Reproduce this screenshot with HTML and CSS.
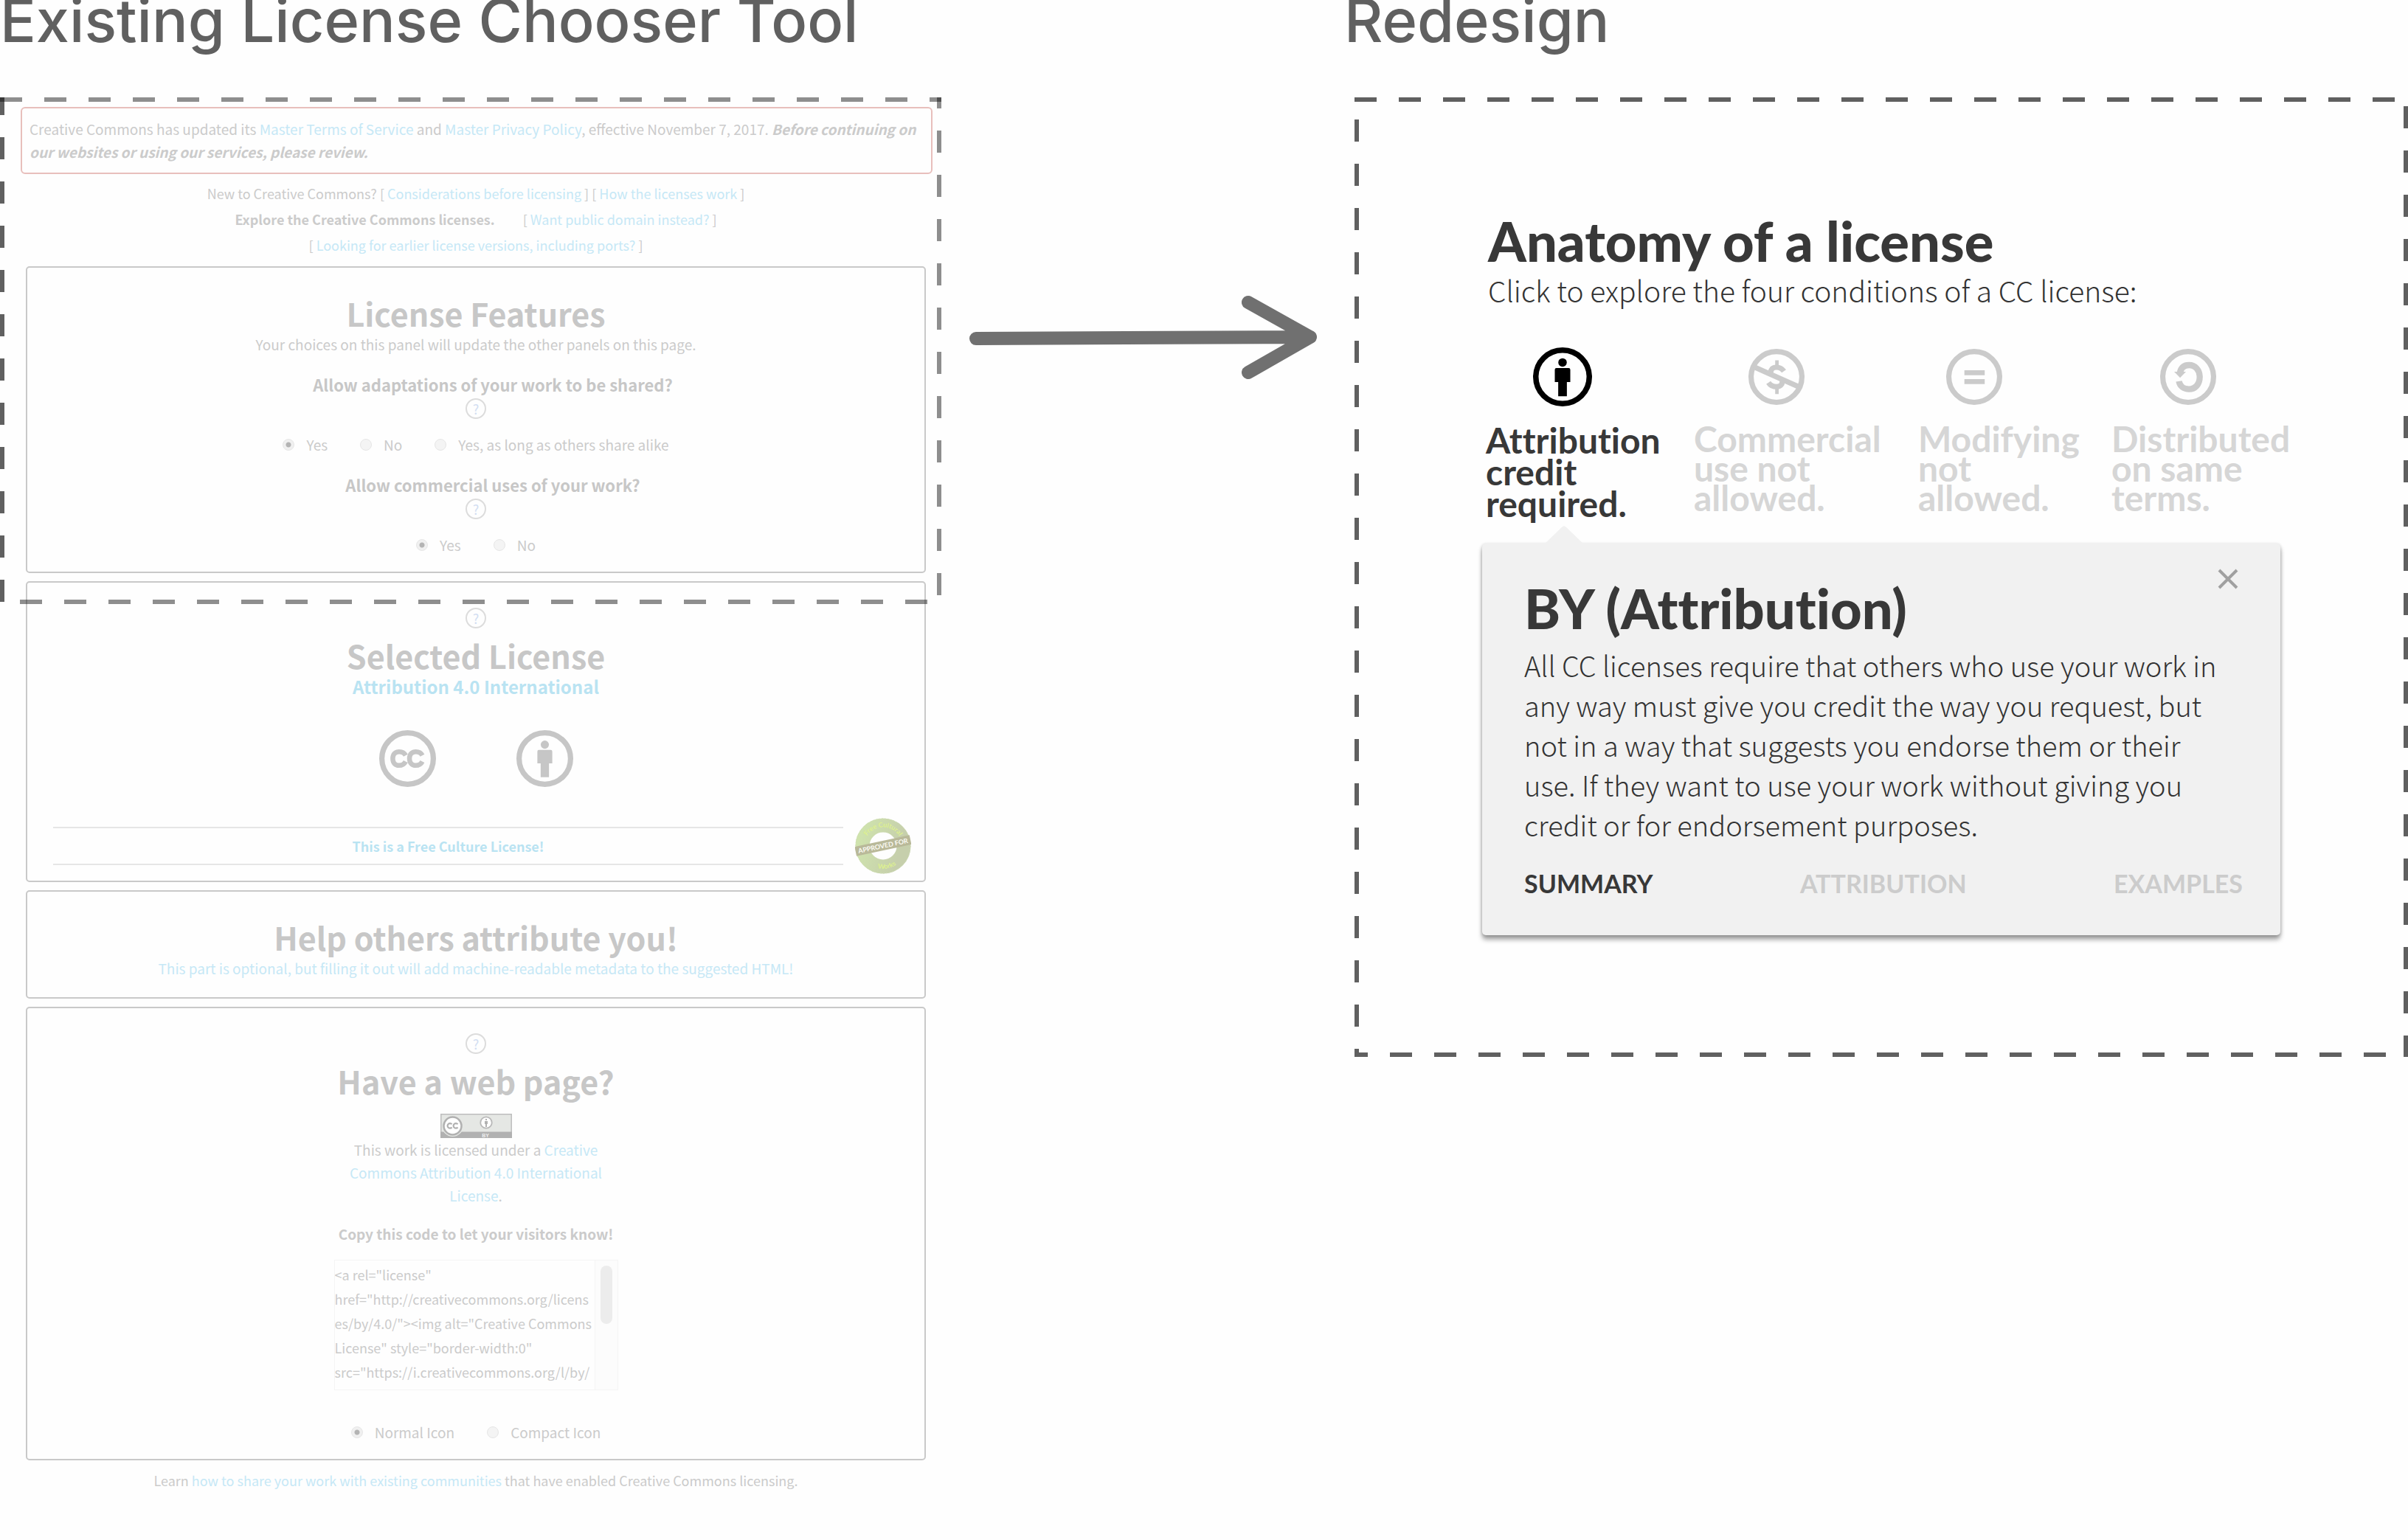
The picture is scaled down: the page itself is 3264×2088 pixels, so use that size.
FILE: index.html
```html
<!DOCTYPE html>
<html lang="en">
<head>
<meta charset="utf-8">
<title>License Chooser: existing tool and redesign</title>
<link rel="stylesheet" href="styles.css">
</head>
<body>
<svg class="sprite" aria-hidden="true">
  <symbol id="icon-by" viewBox="0 0 64 64">
    <circle cx="32" cy="32" r="29" fill="none" stroke="currentColor" stroke-width="6"/>
    <circle cx="32" cy="16.3" r="4.6" fill="currentColor"/>
    <path fill="currentColor" d="M25.400 22.300h13.200q1.800 0 1.800 1.800v13.400h-3.700v15.400h-9.400V37.500h-3.700V24.100q0-1.800 1.800-1.800z"/>
  </symbol>
  <symbol id="icon-cc" viewBox="0 0 64 64">
    <circle cx="32" cy="32" r="29" fill="none" stroke="currentColor" stroke-width="6"/>
    <path fill="none" stroke="currentColor" stroke-width="5.400" d="M29.800 28.500C27.800 24.500 24.300 24.300 22.300 24.300C18.300 24.300 15.300 27 15.300 32C15.300 37 18.300 39.700 22.300 39.700C25 39.700 28.100 38.700 29.800 35.300M48.600 28.500C46.600 24.500 43.100 24.300 41.100 24.300C37.100 24.300 34.100 27 34.100 32C34.100 37 37.100 39.700 41.100 39.700C43.800 39.700 46.900 38.700 48.600 35.300"/>
  </symbol>
  <symbol id="icon-nc" viewBox="0 0 64 64">
    <circle cx="32" cy="32" r="29" fill="none" stroke="currentColor" stroke-width="6"/>
    <path fill="none" stroke="currentColor" stroke-width="6" d="M6 20.500L59 44M40.500 25.500C38 22 35 21 32 21C27.500 21 25.300 23.500 25.500 27.500M38.500 36.500C39 40.500 36.500 43.300 32 43.300C28 43.300 25 41.800 22.800 38.500"/>
    <path fill="none" stroke="currentColor" stroke-width="4" d="M32.500 13v8M32.500 43v8.500"/>
  </symbol>
  <symbol id="icon-nd" viewBox="0 0 64 64">
    <circle cx="32" cy="32" r="29" fill="none" stroke="currentColor" stroke-width="6"/>
    <path fill="currentColor" d="M20.800 24.500h23.200v5.700h-23.200zM20.800 34.600h23.200v5.700h-23.200z"/>
  </symbol>
  <symbol id="icon-sa" viewBox="0 0 64 64">
    <circle cx="32" cy="32" r="29" fill="none" stroke="currentColor" stroke-width="6"/>
    <path fill="none" stroke="currentColor" stroke-width="7" d="M22.500 27.500C24 20.500 28.500 18.500 33 18.500C40 18.500 45.200 24 45.200 32.300C45.200 40.500 40 46 33 46C27.500 46 22.500 43 21.500 37"/>
    <path fill="currentColor" d="M16 26h13.500l-6.700 7z"/>
  </symbol>
</svg>

<main class="board">
  <section class="before">
    <h1 class="board-title">Existing License Chooser Tool</h1>
    <div class="chooser">
      <div class="frame frame-before"></div>
      <p class="notice">Creative Commons has updated its <a href="#">Master Terms of Service</a> and <a href="#">Master Privacy Policy</a>, effective November 7, 2017. <strong><em>Before continuing on our websites or using our services, please review.</em></strong></p>
      <nav class="intro">
        <p>New to Creative Commons? [ <a href="#">Considerations before licensing</a> ] [ <a href="#">How the licenses work</a> ]</p>
        <p class="split"><strong>Explore the Creative Commons licenses.</strong> <span>[ <a href="#">Want public domain instead?</a> ]</span></p>
        <p>[ <a href="#">Looking for earlier license versions, including ports?</a> ]</p>
      </nav>

      <section class="panel">
        <h2>License Features</h2>
        <p>Your choices on this panel will update the other panels on this page.</p>
        <h3>Allow adaptations of your work to be shared?</h3>
        <button class="help" type="button">?</button>
        <div class="choices">
          <label><input type="radio" name="adapt" checked>Yes</label>
          <label><input type="radio" name="adapt">No</label>
          <label><input type="radio" name="adapt">Yes, as long as others share alike</label>
        </div>
        <h3>Allow commercial uses of your work?</h3>
        <button class="help" type="button">?</button>
        <div class="choices">
          <label><input type="radio" name="commercial" checked>Yes</label>
          <label><input type="radio" name="commercial">No</label>
        </div>
      </section>

      <section class="panel selected">
        <button class="help" type="button">?</button>
        <h2>Selected License</h2>
        <p class="license-name"><a href="#">Attribution 4.0 International</a></p>
        <div class="marks">
          <svg role="img" aria-label="Creative Commons"><use href="#icon-cc"/></svg>
          <svg role="img" aria-label="Attribution"><use href="#icon-by"/></svg>
        </div>
        <div class="culture">
          <p><a href="#">This is a Free Culture License!</a></p>
          <svg class="seal" viewBox="0 0 76 76" role="img" aria-label="Approved for Free Cultural Works">
            <defs>
              <linearGradient id="seal-green" x1="0" y1="0" x2="1" y2="0.300">
                <stop offset="0" stop-color="#cfe3ad"/>
                <stop offset="1" stop-color="#c6cfac"/>
              </linearGradient>
              <path id="seal-top" d="M12.500 38A25.500 25.500 0 0 1 63.500 38"/>
              <path id="seal-bottom" d="M7 38A31 31 0 0 0 69 38"/>
            </defs>
            <circle cx="38" cy="38" r="28" fill="none" stroke="url(#seal-green)" stroke-width="19"/>
            <circle cx="38" cy="38" r="37" fill="none" stroke="#cfddb4" stroke-width="1" stroke-dasharray="2 2"/>
            <text class="seal-ring"><textPath href="#seal-top" startOffset="50%">Free Cultural</textPath></text>
            <text class="seal-ring"><textPath href="#seal-bottom" startOffset="56%">Works</textPath></text>
            <g transform="rotate(-12 38 38)">
              <path fill="#b9b999" d="M0 31h76v13h-76z"/>
              <text class="seal-band" x="38" y="41">APPROVED FOR</text>
            </g>
          </svg>
        </div>
      </section>

      <section class="panel attribute">
        <h2>Help others attribute you!</h2>
        <p><a href="#">This part is optional, but filling it out will add machine-readable metadata to the suggested HTML!</a></p>
      </section>

      <section class="panel">
        <button class="help" type="button">?</button>
        <h2>Have a web page?</h2>
        <svg class="badge" viewBox="0 0 97 33" role="img" aria-label="CC BY">
          <path fill="#e5e7e4" stroke="#bdbdbd" stroke-width="1.500" d="M.8.800h95.400v31.400H.8z"/>
          <path fill="#b1b1b1" d="M0 24.500h97V33H0z"/>
          <circle cx="16.500" cy="16.500" r="14.500" fill="#e5e7e4"/>
          <circle cx="16.500" cy="16.500" r="12" fill="#fff" stroke="#b1b1b1" stroke-width="2.500"/>
          <path fill="none" stroke="#b1b1b1" stroke-width="2.200" d="M15.500 14.300a3.300 3.300 0 1 0 0 4.200M23.500 14.300a3.300 3.300 0 1 0 0 4.200"/>
          <circle cx="62" cy="12" r="7.700" fill="#fff" stroke="#b9b9b9" stroke-width="1.800"/>
          <path fill="#b1b1b1" d="M60 10h4v4h-1v4h-2v-4h-1zM61 7h2v2h-2z"/>
          <text class="badge-text" x="61" y="31.500">BY</text>
        </svg>
        <p class="sample">This work is licensed under a <a href="#">Creative Commons Attribution 4.0 International License</a>.</p>
        <label class="code-label" for="code">Copy this code to let your visitors know!</label>
        <div class="code-box">
          <textarea id="code" class="code" readonly>&lt;a rel="license"
href="http://creativecommons.org/licens
es/by/4.0/"&gt;&lt;img alt="Creative Commons
License" style="border-width:0"
src="https://i.creativecommons.org/l/by/</textarea>
          <div class="track"><div class="thumb"></div></div>
        </div>
        <div class="choices">
          <label><input type="radio" name="icon" checked>Normal Icon</label>
          <label><input type="radio" name="icon">Compact Icon</label>
        </div>
      </section>
      <p class="learn">Learn <a href="#">how to share your work with existing communities</a> that have enabled Creative Commons licensing.</p>
    </div>
  </section>

  <svg class="arrow" viewBox="0 0 546 132" role="img" aria-label="becomes">
    <path d="M47 68L500 66M416 19L500 66L416 114"/>
  </svg>

  <section class="after">
    <h1 class="board-title">Redesign</h1>
    <div class="frame frame-after">
      <header class="anatomy">
        <h2>Anatomy of a license</h2>
        <p>Click to explore the four conditions of a CC license:</p>
      </header>
      <div class="conditions">
        <button class="condition active" type="button"><svg><use href="#icon-by"/></svg><span>Attribution<br>credit<br>required.</span></button>
        <button class="condition wide" type="button"><svg><use href="#icon-nc"/></svg><span>Commercial<br>use not<br>allowed.</span></button>
        <button class="condition short" type="button"><svg><use href="#icon-nd"/></svg><span>Modifying<br>not<br>allowed.</span></button>
        <button class="condition" type="button"><svg><use href="#icon-sa"/></svg><span>Distributed<br>on same<br>terms.</span></button>
      </div>
      <article class="card">
        <button class="close" type="button" aria-label="Close"><svg viewBox="0 0 28 28"><path d="M2 2L26 26M26 2L2 26"/></svg></button>
        <h2>BY (Attribution)</h2>
        <p>All CC licenses require that others who use your work in any way must give you credit the way you request, but not in a way that suggests you endorse them or their use. If they want to use your work without giving you credit or for endorsement purposes.</p>
        <div class="tabs">
          <button class="tab current" type="button">SUMMARY</button>
          <button class="tab" type="button">ATTRIBUTION</button>
          <button class="tab" type="button">EXAMPLES</button>
        </div>
      </article>
    </div>
  </section>
</main>
</body>
</html>
```
FILE: styles.css
```css
* {
  box-sizing: border-box;
}

body,
h1,
h2,
h3,
p {
  margin: 0;
}

body {
  background: #fefefe;
  font-family: "Noto Sans CJK SC", "Noto Sans", sans-serif;
  color: #cbcbcb;
}

button {
  padding: 0;
  border: 0;
  background: none;
  font: inherit;
  color: inherit;
}

a {
  color: #c6e8f6;
  text-decoration: none;
}

.sprite {
  display: none;
}

.board {
  display: grid;
  grid-template-columns: 1276fr 546fr 1442fr;
  align-items: start;
}

.board > * {
  min-width: 0;
}

.board-title {
  margin-bottom: 76px;
  font: 500 81px/56px "Inter", "Liberation Sans", sans-serif;
  color: #606060;
  white-space: nowrap;
}

/* Dashed outlines: 30px dashes on a 60px pitch, one gradient per side */
.frame {
  --ink: #606060;
  --edge: #606060;
  --row: repeating-linear-gradient(90deg, var(--ink) 0 30px, transparent 30px 60px);
  --right: repeating-linear-gradient(180deg, var(--ink) 0 30px, transparent 30px 60px);
  --left: repeating-linear-gradient(180deg, var(--edge) 0 30px, transparent 30px 60px);
  background-image: var(--row), var(--right), var(--row), var(--left);
  background-size: 60px 6px, 6px 60px, 60px 6px, 6px 60px;
  background-repeat: repeat-x, repeat-y, repeat-x, repeat-y;
}

.frame-before {
  --ink: rgba(0, 0, 0, 0.44);
  position: absolute;
  z-index: 1;
  top: 0;
  left: 0;
  width: 100%;
  height: 687px;
  background-position: left 0 top 0, right 0 top -15px, left 27px bottom 0, left 0 top -6px;
  pointer-events: none;
}

.frame-after {
  margin-left: 14px;
  padding: 159px 173px 165px;
  background-position: left 0 top 0, right 0 top 12px, left -12px bottom 0, left 0 top 30px;
}

/* Existing tool */
.chooser {
  position: relative;
  padding: 13px 21px 0 35px;
  font-size: 18px;
  line-height: 30px;
  text-align: center;
}

.notice {
  margin: 0 -9px 9px -7px;
  padding: 12px 10px 13px;
  border: 2px solid #e8bfbc;
  border-radius: 6px;
  font-size: 19px;
  line-height: 31px;
  text-align: left;
}

.intro {
  margin-bottom: 11px;
  line-height: 35px;
}

.split {
  display: flex;
  justify-content: center;
  gap: 38px;
}

.panel {
  display: flex;
  flex-direction: column;
  align-items: center;
  margin-bottom: 11px;
  padding: 34px 0 21px;
  border: 2px solid #c9c9c9;
  border-radius: 5px;
  font-size: 19px;
}

.panel h2 {
  margin-bottom: 1px;
  font-size: 43px;
  line-height: 54px;
  color: #c7c7c7;
}

.panel h3 {
  margin-top: 23px;
  padding-left: 46px;
  font-size: 22px;
  line-height: 32px;
  color: #c7c7c7;
}

.help {
  width: 28px;
  height: 28px;
  margin-top: 3px;
  border: 2px solid #dcdcdc;
  border-radius: 50%;
  font-size: 18px;
  line-height: 24px;
  color: #d3def2;
}

.choices {
  display: flex;
  gap: 44px;
  margin-top: 20px;
}

.choices label {
  display: flex;
  align-items: center;
  gap: 16px;
}

input[type="radio"] {
  appearance: none;
  width: 16px;
  height: 16px;
  margin: 0;
  border: 1px solid #e6e6e6;
  border-radius: 50%;
  background: #f4f4f4;
}

input[type="radio"]:checked {
  background: radial-gradient(circle, #b4b4b4 0 3px, #f0f0f0 4px);
}

.panel > .help:first-child {
  margin: 0 0 9px;
}

.selected {
  padding-bottom: 9px;
}

.license-name {
  font-size: 24px;
  font-weight: 700;
}

.license-name a,
.culture a {
  color: #b9e3f2;
}

.marks {
  display: flex;
  gap: 109px;
  margin: 44px 0 42px;
  color: #c6c6c6;
}

.marks svg {
  width: 77px;
  height: 77px;
}

.culture {
  display: flex;
  align-items: center;
  align-self: stretch;
  gap: 16px;
  padding: 0 18px 0 35px;
  font-size: 18px;
  font-weight: 700;
}

.culture p {
  flex: 1;
  padding: 9px 0;
  border: solid #e6e6e6;
  border-width: 2px 0;
}

.seal {
  width: 76px;
  height: 76px;
}

.seal-ring {
  font: 700 9px "Lato", sans-serif;
  fill: #ddf08f;
  text-anchor: middle;
}

.seal-band {
  font: 700 9px "Lato", sans-serif;
  fill: #fbfbf5;
  text-anchor: middle;
}

.attribute {
  padding-bottom: 24px;
}

.badge {
  width: 97px;
  height: 33px;
  margin-top: 17px;
}

.badge-text {
  font: 700 7px "Liberation Sans", sans-serif;
  fill: #eeeeee;
  text-anchor: middle;
}

.sample {
  max-width: 350px;
  line-height: 31px;
}

.code-label {
  margin-top: 22px;
  font-weight: 700;
}

.code-box {
  display: flex;
  width: 385px;
  height: 177px;
  margin: 20px 0 22px;
  border: 1px solid #f4f4f4;
}

.code {
  flex: 1;
  min-width: 0;
  padding: 3px 0;
  border: 0;
  background: none;
  font: inherit;
  font-size: 18px;
  line-height: 33px;
  color: inherit;
  white-space: pre;
  overflow: hidden;
  resize: none;
}

.track {
  width: 31px;
  padding: 7px;
  border-left: 1px solid #f4f4f4;
  background: #fcfcfc;
}

.thumb {
  height: 79px;
  border-radius: 8px;
  background: #ececec;
}

.learn {
  margin-top: 12px;
}

/* Arrow between the two designs */
.arrow {
  width: 100%;
  margin-top: 391px;
  fill: none;
  stroke: #707070;
  stroke-width: 18px;
  stroke-linecap: round;
  stroke-linejoin: round;
}

/* Redesign */
.anatomy {
  padding-left: 8px;
}

.after h2 {
  font: 900 74px/72px "Lato", sans-serif;
  font-variant-ligatures: none;
  color: #383838;
}

.after p {
  font-size: 38px;
  font-weight: 300;
  line-height: 54px;
  color: #333333;
}

.after .anatomy p {
  font-size: 39px;
  line-height: 60px;
}

.conditions {
  display: grid;
  grid-template-columns: 282fr 304fr 262fr minmax(0, 229fr);
  align-items: start;
  margin: 48px 0 33px;
  padding-left: 5px;
}

.condition {
  font: 700 48px/40px "Lato", sans-serif;
  font-variant-ligatures: none;
  color: #d6d6d6;
  text-align: left;
  white-space: nowrap;
}

.condition svg {
  display: block;
  width: 80px;
  height: 80px;
  margin: 0 0 24px 64px;
  padding: 2px;
  color: #cbcbcb;
}

.condition.wide svg {
  margin-left: 72px;
}

.condition.short svg {
  margin-left: 36px;
}

.condition.active {
  line-height: 43px;
  color: #383838;
}

.condition.active svg {
  padding: 0;
  color: #000000;
}

.card {
  position: relative;
  padding: 52px 51px 50px 57px;
  border-radius: 5px;
  background: #f1f1f1;
  box-shadow: 0 6px 6px rgba(0, 0, 0, 0.35), 0 1px 4px rgba(0, 0, 0, 0.2);
}

.card::before {
  content: "";
  position: absolute;
  top: -24px;
  left: 84px;
  width: 54px;
  height: 25px;
  background: #f1f1f1;
  clip-path: polygon(0 100%, 44% 8%, 50% 0, 56% 8%, 100% 100%);
}

.card p {
  margin: 14px 20px 33px 0;
}

.close {
  position: absolute;
  top: 34px;
  right: 57px;
  width: 28px;
  height: 28px;
}

.close svg {
  display: block;
  fill: none;
  stroke: #a0a0a0;
  stroke-width: 4px;
}

.tabs {
  display: flex;
  justify-content: space-between;
}

.tab {
  font: 700 34px/40px "Lato", sans-serif;
  color: #cccccc;
}

.tab.current {
  color: #383838;
}
```
